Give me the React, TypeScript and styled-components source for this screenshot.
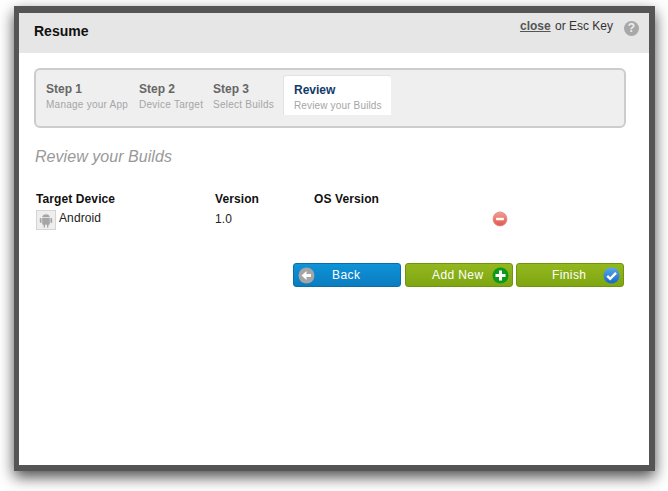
import React from "react";
import styled, { createGlobalStyle } from "styled-components";

const steps = [
  { title: "Step 1", body: "Manage your App" },
  { title: "Step 2", body: "Device Target" },
  { title: "Step 3", body: "Select Builds" },
];

const App = () => {
  return (
    <>
      <GlobalStyle />
      <Modal>
        <Header>
          <Title>Resume</Title>
          <CloseRow>
            <CloseLink>close</CloseLink> or Esc Key
            <HelpIcon>?</HelpIcon>
          </CloseRow>
        </Header>
        <Content>
          <StepBox>
            {steps.map((v, i) => (
              <Step key={i}>
                <StepTitle>{v.title}</StepTitle>
                <StepBody>{v.body}</StepBody>
              </Step>
            ))}
            <ActiveStep>
              <StepTitle $active>Review</StepTitle>
              <StepBody $active>Review your Builds</StepBody>
            </ActiveStep>
          </StepBox>
          <Heading>Review your Builds</Heading>
          <BuildGrid>
            <HeadCell>Target Device</HeadCell>
            <HeadCell>Version</HeadCell>
            <HeadCell>OS Version</HeadCell>
            <span />
            <DeviceCell>
              <DeviceIcon>
                <svg width="14" height="16" viewBox="0 0 14 16" fill="#a6a6a6">
                  <path d="M3.2 5.2 C3.3 3.4 5 2.2 7 2.2 C9 2.2 10.7 3.4 10.8 5.2 Z" />
                  <path d="M3.2 5.9 H10.8 V12 C10.8 12.5 10.4 12.8 10 12.8 H9.4 V15 C9.4 16 8 16 8 15 V12.8 H6 V15 C6 16 4.6 16 4.6 15 V12.8 H4 C3.6 12.8 3.2 12.5 3.2 12 Z" />
                  <rect x="0.8" y="5.9" width="1.8" height="5" rx="0.9" />
                  <rect x="11.4" y="5.9" width="1.8" height="5" rx="0.9" />
                </svg>
              </DeviceIcon>
              <DeviceName>Android</DeviceName>
            </DeviceCell>
            <VersionCell>1.0</VersionCell>
            <span />
            <RemoveCell>
              <svg width="16" height="16" viewBox="0 0 16 16">
                <defs>
                  <linearGradient id="removeFill" x1="0" y1="0" x2="0" y2="1">
                    <stop offset="0" stopColor="#f49c92" />
                    <stop offset="1" stopColor="#e2574c" />
                  </linearGradient>
                </defs>
                <circle cx="8" cy="8" r="7" fill="url(#removeFill)" stroke="#d98a80" strokeWidth="0.8" />
                <rect x="4" y="6.8" width="8" height="2.4" rx="0.8" fill="#fff" />
              </svg>
            </RemoveCell>
          </BuildGrid>
          <ButtonRow>
            <ActionButton $color="blue" $gap={4}>
              <IconSlot $side="left">
                <svg width="17" height="17" viewBox="0 0 17 17">
                  <circle cx="8.5" cy="8.5" r="8" fill="#a5a5a5" />
                  <path d="M3.5 8.5 L8.5 4 V7 H13 V10 H8.5 V13 Z" fill="#fff" />
                </svg>
              </IconSlot>
              <ButtonLabel $x={39}>Back</ButtonLabel>
            </ActionButton>
            <ActionButton $color="green" $gap={3}>
              <ButtonLabel $x={27}>Add New</ButtonLabel>
              <IconSlot $side="right">
                <svg width="17" height="17" viewBox="0 0 17 17">
                  <circle cx="8.5" cy="8.5" r="8" fill="#0e9a18" />
                  <path d="M7 3.5 H10 V7 H13.5 V10 H10 V13.5 H7 V10 H3.5 V7 H7 Z" fill="#fff" />
                </svg>
              </IconSlot>
            </ActionButton>
            <ActionButton $color="green" $gap={0}>
              <ButtonLabel $x={36}>Finish</ButtonLabel>
              <IconSlot $side="right">
                <svg width="17" height="17" viewBox="0 0 17 17">
                  <defs>
                    <linearGradient id="finishFill" x1="0" y1="0" x2="0" y2="1">
                      <stop offset="0" stopColor="#5aa9ea" />
                      <stop offset="1" stopColor="#1667c8" />
                    </linearGradient>
                  </defs>
                  <circle cx="8.5" cy="8.5" r="8" fill="url(#finishFill)" />
                  <path d="M4.2 8.8 L7.2 11.8 L13 5.8" fill="none" stroke="#fff" strokeWidth="2.4" />
                </svg>
              </IconSlot>
            </ActionButton>
          </ButtonRow>
        </Content>
      </Modal>
    </>
  );
};

export default App;

const GlobalStyle = createGlobalStyle`
  html, body {
    margin: 0;
    background: #fff;
  }
  body {
    font-family: "Liberation Sans", Arial, sans-serif;
    min-height: 491px;
  }
  #root {
    padding-top: 6px;
  }
`;
const Modal = styled.div`
  box-sizing: border-box;
  width: 641px;
  height: 465px;
  margin-left: 14px;
  border: solid #555;
  border-width: 7px 6px 6px 5px;
  background: #fff;
  box-shadow: 0 6px 14px rgba(0, 0, 0, 0.7);
`;
const Header = styled.div`
  height: 40px;
  background: #e6e6e6;
  display: flex;
  justify-content: space-between;
  padding: 0 10px 0 15px;
`;
const Title = styled.h1`
  margin: 10px 0 0;
  font-size: 14px;
  line-height: 16px;
  font-weight: bold;
  color: #111;
`;
const CloseRow = styled.div`
  display: flex;
  align-items: flex-start;
  padding-top: 6px;
  font-size: 12px;
  line-height: 15px;
  color: #333;
  white-space: pre;
`;
const CloseLink = styled.a`
  font-weight: bold;
  color: #555;
  text-decoration: underline;
  margin-right: 1px;
`;
const HelpIcon = styled.span`
  width: 15px;
  height: 15px;
  margin: 2px 0 0 11px;
  border-radius: 50%;
  background: #a8a8a8;
  color: #eee;
  font-size: 12px;
  font-weight: bold;
  line-height: 15px;
  text-align: center;
`;
const Content = styled.div`
  padding: 15px 23px 0 15px;
`;
const StepBox = styled.div`
  box-sizing: border-box;
  height: 60px;
  border: 2px solid #ccc;
  border-radius: 6px;
  background: #efefef;
  display: grid;
  grid-template-columns: 83px 64px 60px 108px;
  column-gap: 10px;
  padding: 5px 0 0 10px;
`;
const Step = styled.div`
  padding-top: 7px;
`;
const ActiveStep = styled.div`
  box-sizing: border-box;
  height: 40px;
  padding: 7px 0 0 10px;
  background: #fff;
  border-radius: 3px 3px 0 0;
  border: solid #e2e2e2;
  border-width: 1px 0 0 1px;
`;
const StepTitle = styled.div<{ $active?: boolean }>`
  font-size: 12px;
  line-height: 14px;
  font-weight: bold;
  color: ${({ $active }) => ($active ? "#123a68" : "#666")};
`;
const StepBody = styled.div<{ $active?: boolean }>`
  margin-top: 2px;
  font-size: 10px;
  line-height: 13px;
  letter-spacing: ${({ $active }) => ($active ? "0.15px" : "0.25px")};
  color: #a5a5a5;
  white-space: nowrap;
`;
const Heading = styled.h2`
  margin: 19px 0 0 1px;
  font-size: 16px;
  line-height: 20px;
  font-weight: normal;
  font-style: italic;
  letter-spacing: 0.05px;
  color: #999;
`;
const BuildGrid = styled.div`
  display: grid;
  grid-template-columns: 179px 99px 178px 16px;
  grid-template-rows: 15px 22px;
  margin: 25px 0 0 2px;
  row-gap: 3px;
  font-size: 12px;
  letter-spacing: 0.1px;
  color: #222;
`;
const HeadCell = styled.div`
  font-weight: bold;
  line-height: 15px;
  color: #111;
`;
const DeviceCell = styled.div`
  display: flex;
  gap: 3px;
`;
const DeviceIcon = styled.span`
  box-sizing: border-box;
  width: 20px;
  height: 20px;
  background: #eee;
  border: 1px solid #d5d5d5;
  display: flex;
  align-items: center;
  justify-content: center;
`;
const DeviceName = styled.span`
  margin-top: 1px;
  line-height: 14px;
`;
const VersionCell = styled.div`
  padding-top: 2px;
  line-height: 14px;
`;
const RemoveCell = styled.div`
  padding-top: 1px;
  height: 16px;
`;
const ButtonRow = styled.div`
  display: flex;
  justify-content: flex-end;
  margin: 31px 2px 0 0;
`;
const ActionButton = styled.button<{ $color: "blue" | "green"; $gap: number }>`
  position: relative;
  box-sizing: border-box;
  width: 108px;
  height: 24px;
  padding: 0;
  margin-right: ${({ $gap }) => $gap}px;
  border-radius: 3px;
  border: 1px solid ${({ $color }) => ($color === "blue" ? "#0a6ea8" : "#6f9410")};
  background: ${({ $color }) =>
    $color === "blue"
      ? "linear-gradient(#0f93d8, #0a7cc0)"
      : "linear-gradient(#93b81e, #7fa512)"};
  color: #fff;
  font-family: inherit;
  font-size: 12px;
  letter-spacing: 0.4px;
  text-align: left;
`;
const ButtonLabel = styled.span<{ $x: number }>`
  margin-left: ${({ $x }) => $x - 1}px;
`;
const IconSlot = styled.span<{ $side: "left" | "right" }>`
  position: absolute;
  top: 3px;
  height: 17px;
  ${({ $side }) => ($side === "left" ? "left: 4px;" : "right: 3px;")}
`;
